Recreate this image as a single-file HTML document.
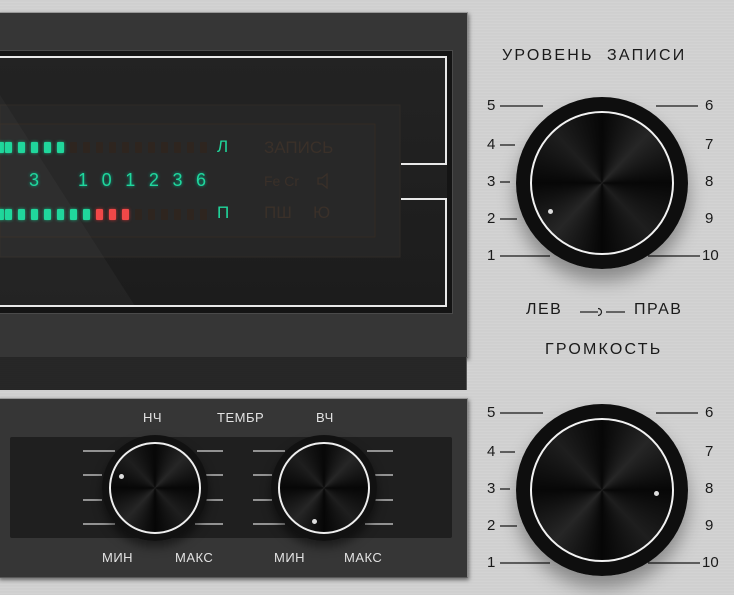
<!DOCTYPE html>
<html><head><meta charset="utf-8"><style>
*{margin:0;padding:0;box-sizing:border-box}
body{width:734px;height:595px;overflow:hidden;position:relative;font-family:"Liberation Sans","DejaVu Sans",sans-serif;
background:repeating-linear-gradient(180deg,#d4d4d4 0,#cbcbcb 1px,#d6d6d6 2px,#cfcfcf 3px);}
.abs{position:absolute}
.panel{background:#363636;border:1px solid #5a5a5a;border-top-color:#999;border-right-color:#888;box-shadow:1px 2px 4px rgba(0,0,0,.5)}
.led{position:absolute;width:7px;height:11px;border-radius:1px}
.g{background:#20d79c;box-shadow:0 0 3px #1bb07f}
.r{background:#f04848;box-shadow:0 0 3px #c03030}
.b{background:#2e251f}
.tx{position:absolute;white-space:nowrap}
.lab{color:#e2e2e2;font-size:13px;letter-spacing:.5px}
.dk{color:#3a3029;font-size:17px}
.num{color:#1a1a1a;font-size:15px}
.knob{position:absolute;border-radius:50%}
.face{background:conic-gradient(#070707,#262626 12%,#070707 25%,#1e1e1e 38%,#060606 50%,#262626 62%,#070707 75%,#1e1e1e 88%,#070707)}
</style></head><body>

<div class="abs panel" style="left:-2px;top:12px;width:470px;height:346px"></div>
<div class="abs" style="left:0;top:357px;width:467px;height:33px;background:repeating-linear-gradient(180deg,#2a2a2a 0,#222 1px,#2c2c2c 2px);border-right:1px solid #555"></div>

<div class="abs" style="left:0;top:50px;width:453px;height:264px;background:#141414;border:1px solid #4a4a4a;border-left:none"></div>
<div class="abs" style="left:0;top:56px;width:447px;height:251px;background:linear-gradient(180deg,#232323,#1c1c1c)"></div>
<svg class="abs" style="left:0;top:0" width="470" height="320">
<rect x="0" y="105" width="400" height="152" fill="#262626" stroke="#2e2a26"/>
<rect x="0" y="124" width="375" height="113" fill="#282828" stroke="#352b24" stroke-width="0.8"/>
<polyline points="0,57 446,57 446,164 401,164" fill="none" stroke="#e8e8e8" stroke-width="2"/>
<polyline points="401,199 446,199 446,306 0,306" fill="none" stroke="#e8e8e8" stroke-width="2"/>
<polygon points="0,95 0,306 135,306" fill="rgba(255,255,255,0.03)"/>
</svg>
<div class="led g" style="left:-3px;top:142px"></div><div class="led g" style="left:5px;top:142px"></div><div class="led g" style="left:18px;top:142px"></div><div class="led g" style="left:31px;top:142px"></div><div class="led g" style="left:44px;top:142px"></div><div class="led g" style="left:57px;top:142px"></div>
<div class="led b" style="left:70px;top:142px"></div><div class="led b" style="left:83px;top:142px"></div><div class="led b" style="left:96px;top:142px"></div><div class="led b" style="left:109px;top:142px"></div><div class="led b" style="left:122px;top:142px"></div><div class="led b" style="left:135px;top:142px"></div><div class="led b" style="left:148px;top:142px"></div><div class="led b" style="left:161px;top:142px"></div><div class="led b" style="left:174px;top:142px"></div><div class="led b" style="left:187px;top:142px"></div><div class="led b" style="left:200px;top:142px"></div>
<div class="led g" style="left:-3px;top:209px"></div><div class="led g" style="left:5px;top:209px"></div><div class="led g" style="left:18px;top:209px"></div><div class="led g" style="left:31px;top:209px"></div><div class="led g" style="left:44px;top:209px"></div><div class="led g" style="left:57px;top:209px"></div><div class="led g" style="left:70px;top:209px"></div><div class="led g" style="left:83px;top:209px"></div>
<div class="led r" style="left:96px;top:209px"></div><div class="led r" style="left:109px;top:209px"></div><div class="led r" style="left:122px;top:209px"></div>
<div class="led b" style="left:135px;top:209px"></div><div class="led b" style="left:148px;top:209px"></div><div class="led b" style="left:161px;top:209px"></div><div class="led b" style="left:174px;top:209px"></div><div class="led b" style="left:187px;top:209px"></div><div class="led b" style="left:200px;top:209px"></div>
<div class="tx" style="left:217px;top:137px;color:#20d79c;font-size:17px">Л</div>
<div class="tx" style="left:217px;top:203px;color:#20d79c;font-size:17px">П</div>
<div class="tx" style="left:29px;top:170px;color:#20d79c;font-size:18px;text-shadow:0 0 3px #0a8">3</div>
<div class="tx" style="left:78px;top:170px;color:#20d79c;font-size:18px;letter-spacing:13.6px;text-shadow:0 0 3px #0a8">101236</div>
<div class="tx dk" style="left:264px;top:138px">ЗАПИСЬ</div>
<div class="tx dk" style="left:264px;top:173px;font-size:14px">Fe Cr</div>
<div class="tx dk" style="left:264px;top:203px">ПШ</div>
<div class="tx dk" style="left:313px;top:203px">Ю</div>
<svg class="abs" style="left:316px;top:172px" width="16" height="18"><path d="M2 6h4l5-4v14l-5-4H2z" fill="none" stroke="#3a3029" stroke-width="1.3"/></svg>

<div class="abs panel" style="left:-2px;top:398px;width:470px;height:180px"></div>
<div class="abs" style="left:10px;top:437px;width:442px;height:101px;background:#1f1f1f;border-radius:2px"></div>
<div class="tx lab" style="left:143px;top:410px">НЧ</div>
<div class="tx lab" style="left:217px;top:410px">ТЕМБР</div>
<div class="tx lab" style="left:316px;top:410px">ВЧ</div>
<div class="tx lab" style="left:102px;top:550px">МИН</div>
<div class="tx lab" style="left:175px;top:550px">МАКС</div>
<div class="tx lab" style="left:274px;top:550px">МИН</div>
<div class="tx lab" style="left:344px;top:550px">МАКС</div>
<svg class="abs" style="left:0;top:0" width="470" height="595" stroke="#d8d8d8" stroke-width="1.2">
<path d="M83 451H115M83 475H102M83 500H102M83 524H115M197 451H223M205 475H223M205 500H223M195 524H223"/>
<path d="M253 451H285M253 475H272M253 500H272M253 524H285M367 451H393M375 475H393M375 500H393M365 524H393"/>
</svg>

<div class="tx" style="left:502px;top:47px;font-size:16px;color:#1a1a1a;letter-spacing:2.2px">УРОВЕНЬ&nbsp; ЗАПИСИ</div>
<div class="tx" style="left:526px;top:301px;font-size:16px;color:#1a1a1a;letter-spacing:1.5px">ЛЕВ</div>
<div class="tx" style="left:634px;top:301px;font-size:16px;color:#1a1a1a;letter-spacing:1.5px">ПРАВ</div>
<svg class="abs" style="left:580px;top:305px" width="50" height="14"><path d="M0 7H18M26 7H45M18 3.5A3.5 3.5 0 0 1 18 10.5" fill="none" stroke="#222" stroke-width="1.2"/></svg>
<div class="tx" style="left:545px;top:341px;font-size:16px;color:#1a1a1a;letter-spacing:2.2px">ГРОМКОСТЬ</div>

<svg class="abs" style="left:480px;top:0" width="254" height="595" stroke="#1a1a1a" stroke-width="1.3">
<path d="M20 106H63M20 145H35M20 182H30M20 219H37M20 256H70M176 106H218M176 145H190M176 182H186M176 219H190M168 256H220"/>
<g transform="translate(0,307)"><path d="M20 106H63M20 145H35M20 182H30M20 219H37M20 256H70M176 106H218M176 145H190M176 182H186M176 219H190M168 256H220"/></g>
</svg>
<div class="tx num" style="left:487px;top:97px">5</div><div class="tx num" style="left:487px;top:136px">4</div><div class="tx num" style="left:487px;top:173px">3</div><div class="tx num" style="left:487px;top:210px">2</div><div class="tx num" style="left:487px;top:247px">1</div>
<div class="tx num" style="left:705px;top:97px">6</div><div class="tx num" style="left:705px;top:136px">7</div><div class="tx num" style="left:705px;top:173px">8</div><div class="tx num" style="left:705px;top:210px">9</div><div class="tx num" style="left:702px;top:247px">10</div>
<div class="tx num" style="left:487px;top:404px">5</div><div class="tx num" style="left:487px;top:443px">4</div><div class="tx num" style="left:487px;top:480px">3</div><div class="tx num" style="left:487px;top:517px">2</div><div class="tx num" style="left:487px;top:554px">1</div>
<div class="tx num" style="left:705px;top:404px">6</div><div class="tx num" style="left:705px;top:443px">7</div><div class="tx num" style="left:705px;top:480px">8</div><div class="tx num" style="left:705px;top:517px">9</div><div class="tx num" style="left:702px;top:554px">10</div>

<div class="knob" style="left:516px;top:97px;width:172px;height:172px;background:radial-gradient(circle,#0e0e0e 80%,#4a4a4a 84%,#0a0a0a 87%,#050505 93%,#2a2a2a 96%,#888 100%);box-shadow:0 12px 18px rgba(0,0,0,.35)"></div>
<div class="knob face" style="left:530px;top:111px;width:144px;height:144px;border:2px solid #f2f2f2"></div>
<div class="knob" style="left:548px;top:209px;width:5px;height:5px;background:#ddd"></div>
<div class="knob" style="left:516px;top:404px;width:172px;height:172px;background:radial-gradient(circle,#0e0e0e 80%,#4a4a4a 84%,#0a0a0a 87%,#050505 93%,#2a2a2a 96%,#888 100%);box-shadow:0 12px 18px rgba(0,0,0,.35)"></div>
<div class="knob face" style="left:530px;top:418px;width:144px;height:144px;border:2px solid #f2f2f2"></div>
<div class="knob" style="left:654px;top:491px;width:5px;height:5px;background:#ddd"></div>

<div class="knob" style="left:102px;top:435px;width:106px;height:106px;background:radial-gradient(circle,#111 80%,#2c2c2c 90%,#1a1a1a 100%);box-shadow:0 6px 10px rgba(0,0,0,.5)"></div>
<div class="knob face" style="left:109px;top:442px;width:92px;height:92px;border:2px solid #eee"></div>
<div class="knob" style="left:119px;top:474px;width:5px;height:5px;background:#ddd"></div>
<div class="knob" style="left:271px;top:435px;width:106px;height:106px;background:radial-gradient(circle,#111 80%,#2c2c2c 90%,#1a1a1a 100%);box-shadow:0 6px 10px rgba(0,0,0,.5)"></div>
<div class="knob face" style="left:278px;top:442px;width:92px;height:92px;border:2px solid #eee"></div>
<div class="knob" style="left:312px;top:519px;width:5px;height:5px;background:#ddd"></div>
</body></html>
